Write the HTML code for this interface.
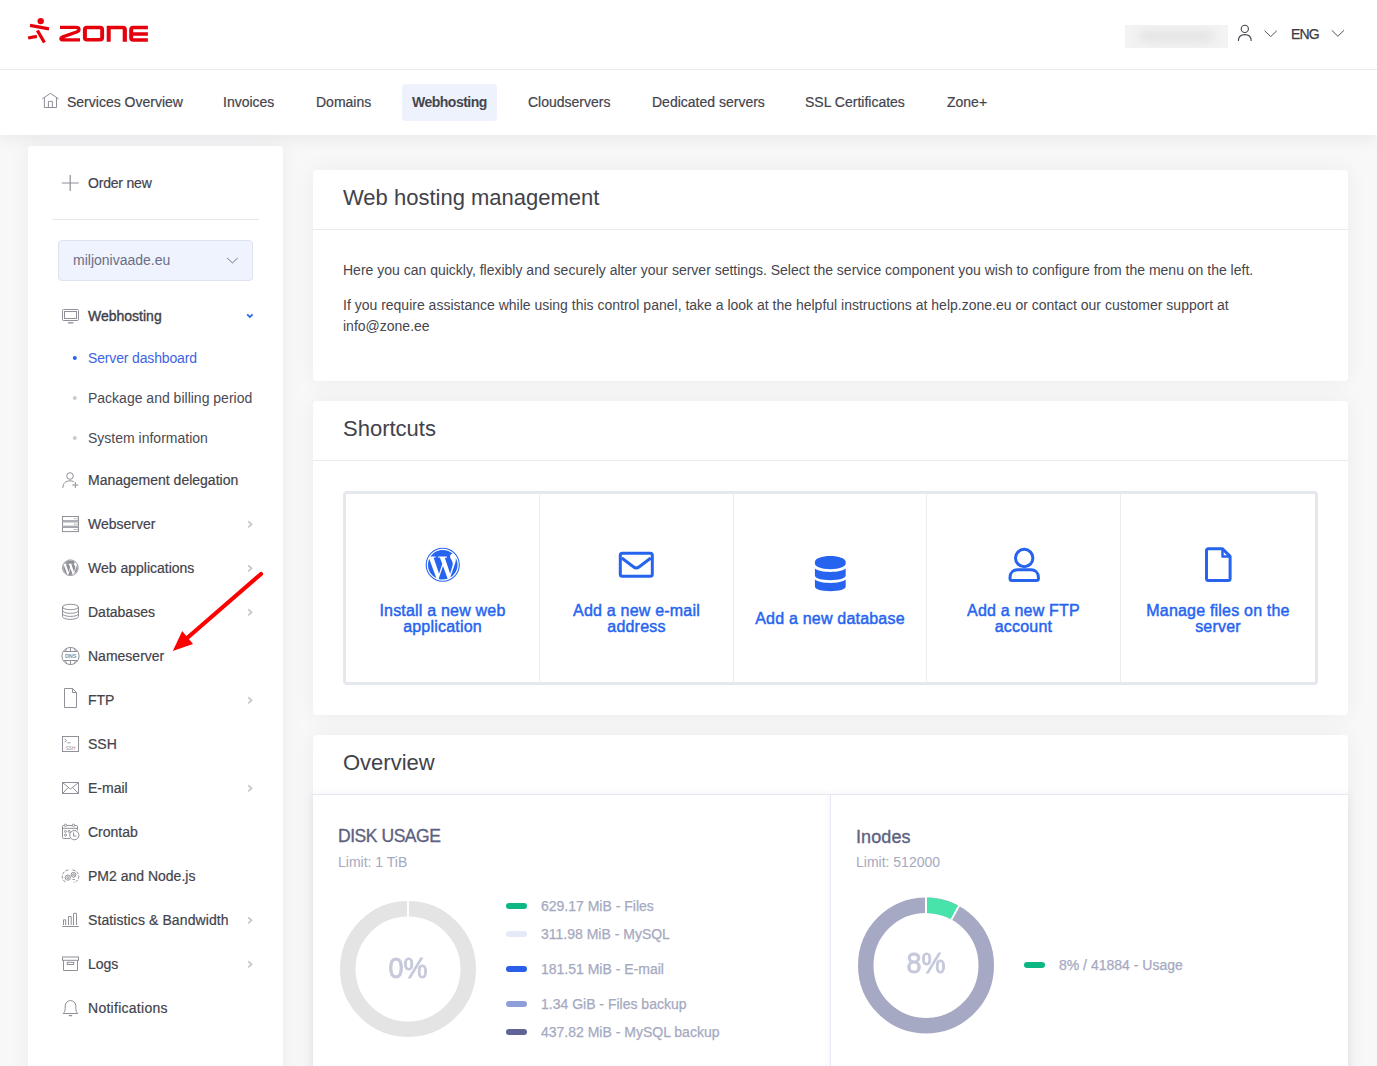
<!DOCTYPE html>
<html><head><meta charset="utf-8">
<style>
*{box-sizing:border-box;margin:0;padding:0}
html,body{width:1377px;height:1066px;overflow:hidden}
body{background:#f8f8f8;font-family:"Liberation Sans",sans-serif;color:#3b3b45;position:relative;font-size:14px}
.abs{position:absolute}
.t{position:absolute;white-space:nowrap;line-height:1}
#hdr{position:absolute;left:0;top:0;width:1377px;height:70px;background:#fff;border-bottom:1px solid #e9e9f0}
#nav{position:absolute;left:0;top:70px;width:1377px;height:65px;background:#fff;box-shadow:0 3px 16px rgba(20,20,50,.07);clip-path:inset(0 0 -40px 0)}
.card{position:absolute;background:#fff;border-radius:4px;box-shadow:0 0 22px rgba(20,20,50,.055)}
.nv{font-size:14px;color:#43434c;-webkit-text-stroke:0.2px #43434c}
.sc{text-align:center;font-size:16px;color:#2664f0;-webkit-text-stroke:0.45px #2664f0;letter-spacing:0.2px}
.ovh{font-size:17.5px;color:#5d6280;-webkit-text-stroke:0.35px #5d6280}
.ovl{font-size:14px;color:#a6a8c0}
.pct{text-align:center;font-size:30px;color:#c6c9db;-webkit-text-stroke:0.9px #c6c9db;transform:scaleX(0.9);transform-origin:40px 0}
.lg{font-size:14px;color:#a5a9c0;-webkit-text-stroke:0.25px #a5a9c0}
.med{-webkit-text-stroke:0.25px currentColor}
</style></head><body>
<div id="hdr"></div>
<div id="nav"></div>
<svg class="abs" style="left:0;top:0" width="160" height="60" viewBox="0 0 160 60">
<g fill="#e5000b" stroke="none">
<circle cx="40.7" cy="21.1" r="3.2"/>
</g>
<g stroke="#e5000b" stroke-width="3.3" fill="none">
<line x1="30" y1="25.4" x2="49" y2="28.8"/>
<line x1="37.4" y1="30.5" x2="44.4" y2="42.5"/>
<line x1="28.1" y1="38" x2="36.9" y2="36.3"/>
<path d="M60,27.45 L76,27.45 C80,27.45 79.8,31 76.6,32 L63.5,36.6 C60,37.9 60.2,39.95 63,39.95 L80,39.95" stroke-linejoin="round"/>
</g>
<g fill="#e5000b" fill-rule="evenodd">
<path d="M86.9,25.8 H100.1 Q104.1,25.8 104.1,29.8 V37.6 Q104.1,41.6 100.1,41.6 H86.9 Q82.9,41.6 82.9,37.6 V29.8 Q82.9,25.8 86.9,25.8 Z M86.9,29.3 V38.1 H100.2 V29.3 Z"/>
<path d="M106.7,25.8 H122.9 Q126.9,25.8 126.9,29.8 V41.8 H122.7 V29.3 H110.7 V41.8 H106.7 Z"/>
<path d="M133.2,25.8 H147.9 V29.3 H133.2 V32.2 H147.9 V35.8 H133.2 V38.3 H147.9 V41.8 H133.2 Q129.2,41.8 129.2,37.8 V29.8 Q129.2,25.8 133.2,25.8 Z"/>
</g>
</svg>
<div class="abs" style="left:1125px;top:25px;width:103px;height:23px;background:#f3f3f3;overflow:hidden"><div style="position:absolute;left:14px;top:6px;width:75px;height:11px;background:#e3e3e3;filter:blur(5px);border-radius:6px"></div></div>
<svg class="abs" style="left:1230px;top:20px" width="130" height="30" viewBox="1230 20 130 30">
<g fill="none" stroke="#44444e" stroke-width="1.1">
<circle cx="1244.8" cy="28.9" r="3.6"/>
<path d="M1238.4,40.9 C1238.4,36.9 1241,34.6 1244.8,34.6 C1248.6,34.6 1251.2,36.9 1251.2,40.9"/>
</g>
<g fill="none" stroke="#55555f" stroke-width="1">
<path d="M1264.6,30.7 L1270.7,36.6 L1276.8,30.7"/>
<path d="M1331.8,30.3 L1337.9,36.3 L1344,30.3"/>
</g>
</svg>
<div class="t med" style="left:1291px;top:27px;font-size:14px;color:#3b3b45;letter-spacing:-0.9px">ENG</div>



<div class="abs" style="left:402px;top:84px;width:95px;height:37px;background:#eef2fc;border-radius:4px"></div>
<svg class="abs" style="left:40px;top:90px" width="22" height="20" viewBox="40 90 22 20">
<g fill="none" stroke="#8d8f98" stroke-width="1" stroke-linejoin="miter">
<path d="M42.3,98.9 L50.4,93.3 L58.5,98.9"/>
<path d="M44.4,97.6 V107.5 H56.5 V97.6"/>
<path d="M48.4,107.5 V101.4 H52.4 V107.5"/>
</g>
</svg>
<div class="t nv" style="left:67px;top:95px">Services Overview</div>
<div class="t nv" style="left:223px;top:95px">Invoices</div>
<div class="t nv" style="left:316px;top:95px">Domains</div>
<div class="t" style="left:412px;top:95px;font-weight:700;letter-spacing:-0.5px;color:#45454f">Webhosting</div>
<div class="t nv" style="left:528px;top:95px">Cloudservers</div>
<div class="t nv" style="left:652px;top:95px">Dedicated servers</div>
<div class="t nv" style="left:805px;top:95px">SSL Certificates</div>
<div class="t nv" style="left:947px;top:95px">Zone+</div>

<!-- sidebar -->
<div class="card" style="left:28px;top:146px;width:255px;height:940px;clip-path:inset(-11px -40px -40px -40px)"></div>


<div class="t nv" style="left:88px;top:176px;letter-spacing:-0.2px">Order new</div>
<div class="abs" style="left:52px;top:219px;width:207px;height:1px;background:#e6e8ef"></div>
<div class="abs" style="left:58px;top:240px;width:195px;height:41px;background:#eef3fd;border:1px solid #dde3f0;border-radius:4px"></div>
<div class="t" style="left:73px;top:253px;color:#6b6e84">miljonivaade.eu</div>
<div class="t nv" style="left:88px;top:309px;-webkit-text-stroke:0.35px #3b3b45">Webhosting</div>
<div class="t" style="left:88px;top:351px;color:#3d63e6;letter-spacing:-0.15px">Server dashboard</div>
<div class="t" style="left:88px;top:391px;color:#4a4a55">Package and billing period</div>
<div class="t" style="left:88px;top:431px;color:#4a4a55">System information</div>
<div class="t nv" style="left:88px;top:472.75px">Management delegation</div>
<div class="t nv" style="left:88px;top:516.75px">Webserver</div>
<div class="t nv" style="left:88px;top:560.75px">Web applications</div>
<div class="t nv" style="left:88px;top:604.75px">Databases</div>
<div class="t nv" style="left:88px;top:648.75px">Nameserver</div>
<div class="t nv" style="left:88px;top:692.75px">FTP</div>
<div class="t nv" style="left:88px;top:736.75px">SSH</div>
<div class="t nv" style="left:88px;top:780.75px">E-mail</div>
<div class="t nv" style="left:88px;top:824.75px">Crontab</div>
<div class="t nv" style="left:88px;top:868.75px">PM2 and Node.js</div>
<div class="t nv" style="left:88px;top:912.75px;letter-spacing:0.1px">Statistics &amp; Bandwidth</div>
<div class="t nv" style="left:88px;top:956.75px">Logs</div>
<div class="t nv" style="left:88px;top:1000.75px;letter-spacing:0.27px">Notifications</div>
<svg class="abs" style="left:0;top:0" width="300" height="1066" viewBox="0 0 300 1066">
<g fill="none" stroke="#8f9098" stroke-width="1.2">
<path d="M61.8,183 H78.7 M70.2,175 V191"/>
</g>
<g fill="none" stroke="#5f6075" stroke-width="0.85"><path d="M227.1,258 L232.5,262.9 L237.7,258"/></g>
<g fill="none" stroke="#2a62f0" stroke-width="1.7"><path d="M247.2,314.3 L249.9,317.1 L252.6,314.3"/></g>
<circle cx="74.8" cy="358" r="2" fill="#2a62f0"/>
<circle cx="74.8" cy="398" r="2" fill="#c9cad2"/>
<circle cx="74.8" cy="438" r="2" fill="#c9cad2"/>
<g fill="none" stroke="#c4c5cd" stroke-width="1.6">
<path d="M248.2,521.3 L251.6,524.3 L248.2,527.3"/><path d="M248.2,565.3 L251.6,568.3 L248.2,571.3"/><path d="M248.2,609.3 L251.6,612.3 L248.2,615.3"/><path d="M248.2,697.3 L251.6,700.3 L248.2,703.3"/><path d="M248.2,785.3 L251.6,788.3 L248.2,791.3"/><path d="M248.2,917.3 L251.6,920.3 L248.2,923.3"/><path d="M248.2,961.3 L251.6,964.3 L248.2,967.3"/></g>
<g fill="none" stroke="#8f9098" stroke-width="1">
<!-- monitor -->
<rect x="62.5" y="309.5" width="16" height="11" rx="1"/>
<rect x="64.5" y="311.5" width="12" height="7" />
<path d="M68,322.8 H73.5" stroke-width="1.3"/>
<!-- person plus -->
<circle cx="70" cy="476" r="3.3"/>
<path d="M62.8,488 C63,483 66,480.8 70,480.8 C71.5,480.8 72.8,481.1 73.8,481.7"/>
<path d="M75.3,482 V488 M72.3,485 H78.3"/>
<!-- webserver -->
<rect x="62.5" y="516.5" width="16" height="4.3"/>
<rect x="62.5" y="521.9" width="16" height="4.3"/>
<rect x="62.5" y="527.3" width="16" height="4.3"/>
<!-- database -->
<ellipse cx="70.5" cy="607" rx="8" ry="2.7"/>
<path d="M62.5,607 V616.5 C62.5,618 66,619.4 70.5,619.4 C75,619.4 78.5,618 78.5,616.5 V607"/>
<path d="M62.5,610.4 C62.5,612 66,613.3 70.5,613.3 C75,613.3 78.5,612 78.5,610.4"/>
<path d="M62.5,613.6 C62.5,615.2 66,616.4 70.5,616.4 C75,616.4 78.5,615.2 78.5,613.6"/>
<!-- dns globe -->
<circle cx="70.5" cy="656" r="8.6"/>
<path d="M63.5,651.5 H77.5 M63.5,660.5 H77.5 M70.5,647.4 V651.5 M70.5,660.5 V664.6 M67,648.2 C66,649.5 65.8,650.5 65.8,651.5 M74,648.2 C75,649.5 75.2,650.5 75.2,651.5 M65.8,660.5 C65.8,661.5 66,662.5 67,663.8 M75.2,660.5 C75.2,661.5 75,662.5 74,663.8"/>
<!-- file -->
<path d="M64.5,688.5 H72.5 L76.5,692.5 V707.5 H64.5 Z M72.5,688.5 V692.5 H76.5"/>
<!-- ssh -->
<rect x="62.5" y="736.5" width="16" height="15"/>
<path d="M64.7,739 L66.6,740.6 L64.7,742.2 M67.5,742.8 H70.5" stroke-width="0.9"/>
<!-- email -->
<rect x="62.5" y="782.5" width="16" height="11"/>
<path d="M62.5,782.5 L70.5,789 L78.5,782.5 M62.5,793.5 L68.3,787.5 M78.5,793.5 L72.7,787.5"/>
<!-- crontab -->
<path d="M70,838.5 H63.3 C62.9,838.5 62.5,838.1 62.5,837.7 V826.3 C62.5,825.9 62.9,825.5 63.3,825.5 H76.7 C77.1,825.5 77.5,825.9 77.5,826.3 V830.5"/>
<path d="M62.5,828.3 H77.5"/>
<circle cx="65.5" cy="825.3" r="1.2" fill="#fff"/><circle cx="73.5" cy="825.3" r="1.2" fill="#fff"/>
<circle cx="65.5" cy="831.4" r="1"/><circle cx="69.2" cy="831.4" r="1"/><circle cx="65.5" cy="835.1" r="1"/>
<circle cx="74.3" cy="835.2" r="4.6" fill="#fff"/>
<path d="M73.6,832.6 V836 H76.2"/>
<!-- pm2 --><g transform="translate(0,-2)">
<path d="M68.4,871.9 C64.7,872.6 62.2,875.2 62.2,878.5 C62.2,880.8 63.4,882.8 65.5,884" stroke-dasharray="3 1.4"/>
<path d="M72.5,871.9 C76.3,872.6 78.8,875.2 78.8,878.5 C78.8,881.4 76.7,883.8 73.6,884.5" stroke-dasharray="3 1.4"/>
<circle cx="67.8" cy="879.6" r="2.6"/><circle cx="67.8" cy="879.6" r="1"/>
<circle cx="73.5" cy="876.8" r="2.4"/><circle cx="73.5" cy="876.8" r="0.9"/>
<path d="M72.5,881.5 H74.8"/>
</g>
<!-- stats -->
<path d="M62.3,926.5 H78.9"/>
<path d="M63.5,925 V919.8 H65.7 V925 M68.5,925 V916.5 H71.2 V925 M73.5,925 V913.3 H76.5 V925"/>
<!-- logs -->
<rect x="62.5" y="957" width="16" height="3.3"/>
<path d="M63.5,960.3 V970.5 H77.5 V960.3"/>
<rect x="67.3" y="962.3" width="6.4" height="2.2"/>
<!-- bell -->
<path d="M63.2,1013.5 H77.8 C76.3,1012 75.8,1010.5 75.8,1008.5 V1005.8 C75.8,1002.8 73.5,1000.6 70.5,1000.6 C67.5,1000.6 65.2,1002.8 65.2,1005.8 V1008.5 C65.2,1010.5 64.7,1012 63.2,1013.5 Z"/>
<path d="M68.8,1015.6 H72.2" stroke-width="1.3"/>
</g>
<g fill="#8f9098">
<circle cx="74.3" cy="518.7" r="0.55"/><circle cx="75.9" cy="518.7" r="0.55"/><circle cx="77.3" cy="518.7" r="0.55"/>
<circle cx="74.3" cy="524.1" r="0.55"/><circle cx="75.9" cy="524.1" r="0.55"/><circle cx="77.3" cy="524.1" r="0.55"/>
<circle cx="74.3" cy="529.5" r="0.55"/><circle cx="75.9" cy="529.5" r="0.55"/><circle cx="77.3" cy="529.5" r="0.55"/>
</g>
<text x="70.6" y="658.3" font-family="Liberation Sans" font-weight="700" font-size="5.6" fill="#8f9098" text-anchor="middle" letter-spacing="-0.2">DNS</text>
<text x="70.5" y="750" font-family="Liberation Sans" font-size="4.6" fill="#8f9098" text-anchor="middle">SSH</text>
<!-- wp gray -->
<circle cx="70.35" cy="567.75" r="7.85" fill="none" stroke="#8f9098" stroke-width="0.9"/><g transform="translate(62.34,559.74) scale(0.668)"><path fill="#8f9098" d="M21.469 6.825c.84 1.537 1.318 3.3 1.318 5.175 0 3.979-2.156 7.456-5.363 9.325l3.295-9.527c.615-1.54.82-2.771.82-3.864 0-.405-.026-.78-.07-1.11m-7.981.105c.647-.03 1.232-.105 1.232-.105.582-.075.514-.93-.067-.899 0 0-1.755.135-2.88.135-1.064 0-2.85-.15-2.85-.15-.585-.03-.661.855-.075.885 0 0 .54.061 1.125.09l1.68 4.605-2.37 7.08L5.354 6.9c.649-.03 1.234-.1 1.234-.1.585-.075.516-.93-.065-.896 0 0-1.746.138-2.874.138-.2 0-.438-.008-.69-.015C4.911 3.15 8.235 1.215 12 1.215c2.809 0 5.365 1.072 7.286 2.833-.046-.003-.091-.009-.141-.009-1.06 0-1.812.923-1.812 1.914 0 .89.513 1.643 1.06 2.531.411.72.89 1.643.89 2.977 0 .915-.354 1.994-.821 3.479l-1.075 3.585-3.9-11.61.001.014zM12 22.784c-1.059 0-2.081-.153-3.048-.437l3.237-9.406 3.315 9.087c.024.053.05.101.078.149-1.12.393-2.325.609-3.582.609M1.211 12c0-1.564.336-3.05.935-4.39L7.29 21.709C3.694 19.96 1.212 16.271 1.211 12"/></g>
</svg>

<!-- main cards -->
<div class="card" style="left:313px;top:170px;width:1035px;height:211px"></div>
<div class="card" style="left:313px;top:401px;width:1035px;height:314px"></div>
<div class="card" style="left:313px;top:735px;width:1035px;height:400px"></div>


<div class="t" style="left:343px;top:187.38px;font-size:22px;color:#42424a">Web hosting management</div>
<div class="abs" style="left:313px;top:229px;width:1035px;height:1px;background:#e8e9f1"></div>
<div class="t" style="left:343px;top:263.15px;color:#46464e">Here you can quickly, flexibly and securely alter your server settings. Select the service component you wish to configure from the menu on the left.</div>
<div class="t" style="left:343px;top:298.15px;color:#46464e">If you require assistance while using this control panel, take a look at the helpful instructions at help.zone.eu or contact our customer support at</div>
<div class="t" style="left:343px;top:319.15px;color:#46464e">info@zone.ee</div>

<div class="t" style="left:343px;top:418.38px;font-size:22px;color:#42424a">Shortcuts</div>
<div class="abs" style="left:313px;top:460px;width:1035px;height:1px;background:#e8e9f1"></div>
<div class="abs" style="left:343px;top:491px;width:975px;height:194px;border:3px solid #e6e8ef;border-radius:4px"></div>
<div class="abs" style="left:539px;top:494px;width:1px;height:188px;background:#ebecf2"></div>
<div class="abs" style="left:733px;top:494px;width:1px;height:188px;background:#ebecf2"></div>
<div class="abs" style="left:926px;top:494px;width:1px;height:188px;background:#ebecf2"></div>
<div class="abs" style="left:1120px;top:494px;width:1px;height:188px;background:#ebecf2"></div>
<div class="t sc" style="left:346px;width:193px;top:603.46px">Install a new web</div>
<div class="t sc" style="left:346px;width:193px;top:619.46px">application</div>
<div class="t sc" style="left:540px;width:193px;top:603.46px">Add a new e-mail</div>
<div class="t sc" style="left:540px;width:193px;top:619.46px">address</div>
<div class="t sc" style="left:734px;width:192px;top:611.46px">Add a new database</div>
<div class="t sc" style="left:927px;width:193px;top:603.46px">Add a new FTP</div>
<div class="t sc" style="left:927px;width:193px;top:619.46px">account</div>
<div class="t sc" style="left:1121px;width:194px;top:603.46px">Manage files on the</div>
<div class="t sc" style="left:1121px;width:194px;top:619.46px">server</div>

<svg class="abs" style="left:0;top:0" width="1377" height="1066" viewBox="0 0 1377 1066">
<!-- wp blue -->
<circle cx="442.75" cy="564.75" r="16.55" fill="none" stroke="#2664f0" stroke-width="1.1"/><g transform="translate(426.29,548.29) scale(1.372)"><path fill="#2664f0" d="M21.469 6.825c.84 1.537 1.318 3.3 1.318 5.175 0 3.979-2.156 7.456-5.363 9.325l3.295-9.527c.615-1.54.82-2.771.82-3.864 0-.405-.026-.78-.07-1.11m-7.981.105c.647-.03 1.232-.105 1.232-.105.582-.075.514-.93-.067-.899 0 0-1.755.135-2.88.135-1.064 0-2.85-.15-2.85-.15-.585-.03-.661.855-.075.885 0 0 .54.061 1.125.09l1.68 4.605-2.37 7.08L5.354 6.9c.649-.03 1.234-.1 1.234-.1.585-.075.516-.93-.065-.896 0 0-1.746.138-2.874.138-.2 0-.438-.008-.69-.015C4.911 3.15 8.235 1.215 12 1.215c2.809 0 5.365 1.072 7.286 2.833-.046-.003-.091-.009-.141-.009-1.06 0-1.812.923-1.812 1.914 0 .89.513 1.643 1.06 2.531.411.72.89 1.643.89 2.977 0 .915-.354 1.994-.821 3.479l-1.075 3.585-3.9-11.61.001.014zM12 22.784c-1.059 0-2.081-.153-3.048-.437l3.237-9.406 3.315 9.087c.024.053.05.101.078.149-1.12.393-2.325.609-3.582.609M1.211 12c0-1.564.336-3.05.935-4.39L7.29 21.709C3.694 19.96 1.212 16.271 1.211 12"/></g>
<g fill="none" stroke="#2664f0" stroke-width="3" stroke-linejoin="round">
<rect x="620.3" y="553.2" width="32" height="23" rx="2"/>
<path d="M621.8,558 L633.3,566.8 Q636.3,569.1 639.3,566.8 L650.8,558"/>
<circle cx="1024.2" cy="558" r="8.7"/>
<path d="M1012,580.6 Q1010,580.6 1010,578.6 V577.5 C1010,572.5 1013.5,569.8 1017.5,569.8 H1031 C1035,569.8 1038.4,572.5 1038.4,577.5 V578.6 Q1038.4,580.6 1036.4,580.6 Z"/>
<path d="M1208.5,548.8 H1222.5 L1230.1,556.4 V578.6 Q1230.1,580.6 1228.1,580.6 H1208.5 Q1206.5,580.6 1206.5,578.6 V550.8 Q1206.5,548.8 1208.5,548.8 Z"/>
<path d="M1222.5,548.8 V556.4 H1230.1" stroke-width="2.5"/>
</g>
<g fill="#2664f0">
<path d="M814.9,562 C814.9,558.5 821.8,556 830.3,556 C838.8,556 845.7,558.5 845.7,562 V563.5 C845.7,566.8 838.8,569.2 830.3,569.2 C821.8,569.2 814.9,566.8 814.9,563.5 Z"/>
<path d="M814.9,568.6 C817.5,570.8 823.5,572 830.3,572 C837.1,572 843.1,570.8 845.7,568.6 V575.6 C845.7,578.4 838.8,580.3 830.3,580.3 C821.8,580.3 814.9,578.4 814.9,575.6 Z"/>
<path d="M814.9,579.6 C817.5,581.8 823.5,583 830.3,583 C837.1,583 843.1,581.8 845.7,579.6 V586.5 C845.7,589.3 838.8,591.2 830.3,591.2 C821.8,591.2 814.9,589.3 814.9,586.5 Z"/>
</g>
</svg>

<div class="t" style="left:343px;top:752.38px;font-size:22px;color:#42424a">Overview</div>
<div class="abs" style="left:313px;top:795px;width:517px;height:320px;background:#fff;box-shadow:0 0 9px rgba(50,50,110,.08)"></div>
<div class="abs" style="left:831px;top:795px;width:517px;height:320px;background:#fff;box-shadow:0 0 9px rgba(50,50,110,.08)"></div>
<div class="abs" style="left:313px;top:794px;width:1035px;height:1px;background:#e6e7f0"></div>
<div class="abs" style="left:830px;top:795px;width:1px;height:300px;background:#e6e7f0"></div>
<div class="t ovh" style="left:338px;top:828.2px;letter-spacing:-0.45px">DISK USAGE</div>
<div class="t ovl" style="left:338px;top:855.35px">Limit: 1 TiB</div>
<div class="t ovh" style="left:856px;top:828.2px;font-size:18px;letter-spacing:0.1px">Inodes</div>
<div class="t ovl" style="left:856px;top:855.15px">Limit: 512000</div>
<div class="t pct" style="left:368px;width:80px;top:953.3px">0%</div>
<div class="t pct" style="left:886px;width:80px;top:948.3px">8%</div>
<div class="abs" style="left:506px;top:903.0px;width:21px;height:5.8px;border-radius:3px;background:#0cb784"></div>
<div class="t lg" style="left:541px;top:899.05px">629.17 MiB - Files</div>
<div class="abs" style="left:506px;top:931.0px;width:21px;height:5.8px;border-radius:3px;background:#e5e9f8"></div>
<div class="t lg" style="left:541px;top:926.95px">311.98 MiB - MySQL</div>
<div class="abs" style="left:506px;top:965.9px;width:21px;height:5.8px;border-radius:3px;background:#2a5ee8"></div>
<div class="t lg" style="left:541px;top:961.65px">181.51 MiB - E-mail</div>
<div class="abs" style="left:506px;top:1001.0px;width:21px;height:5.8px;border-radius:3px;background:#8e9ed8"></div>
<div class="t lg" style="left:541px;top:996.65px">1.34 GiB - Files backup</div>
<div class="abs" style="left:506px;top:1029.0px;width:21px;height:5.8px;border-radius:3px;background:#5e6594"></div>
<div class="t lg" style="left:541px;top:1024.75px">437.82 MiB - MySQL backup</div>
<div class="abs" style="left:1024px;top:962.1px;width:21px;height:5.8px;border-radius:3px;background:#0cb784"></div>
<div class="t lg" style="left:1059px;top:957.75px">8% / 41884 - Usage</div>
<svg class="abs" style="left:0;top:0" width="1377" height="1066" viewBox="0 0 1377 1066">
<circle cx="408" cy="969" r="60.25" fill="none" stroke="#e4e4e4" stroke-width="15.5"/>
<line x1="408" y1="900.0" x2="408" y2="917.5" stroke="#fff" stroke-width="2"/>
<circle cx="926" cy="965.4" r="60.25" fill="none" stroke="#a6a9c3" stroke-width="15.5"/>
<path d="M926,905.15 A60.25,60.25 0 0 1 955.21,912.70" fill="none" stroke="#48e3aa" stroke-width="15.5"/>
<line x1="926" y1="896.4" x2="926" y2="913.9" stroke="#fff" stroke-width="2"/>
<line x1="950.97" y1="920.36" x2="959.45" y2="905.05" stroke="#fff" stroke-width="2"/>
</svg>
<svg class="abs" style="left:0;top:0" width="300" height="700" viewBox="0 0 300 700">
<line x1="261" y1="574" x2="186" y2="639" stroke="#ff0000" stroke-width="4.2" stroke-linecap="round"/>
<path d="M172.8,650.9 L182.2,631 L193,643.9 Z" fill="#ff0000"/>
</svg>
</body></html>
